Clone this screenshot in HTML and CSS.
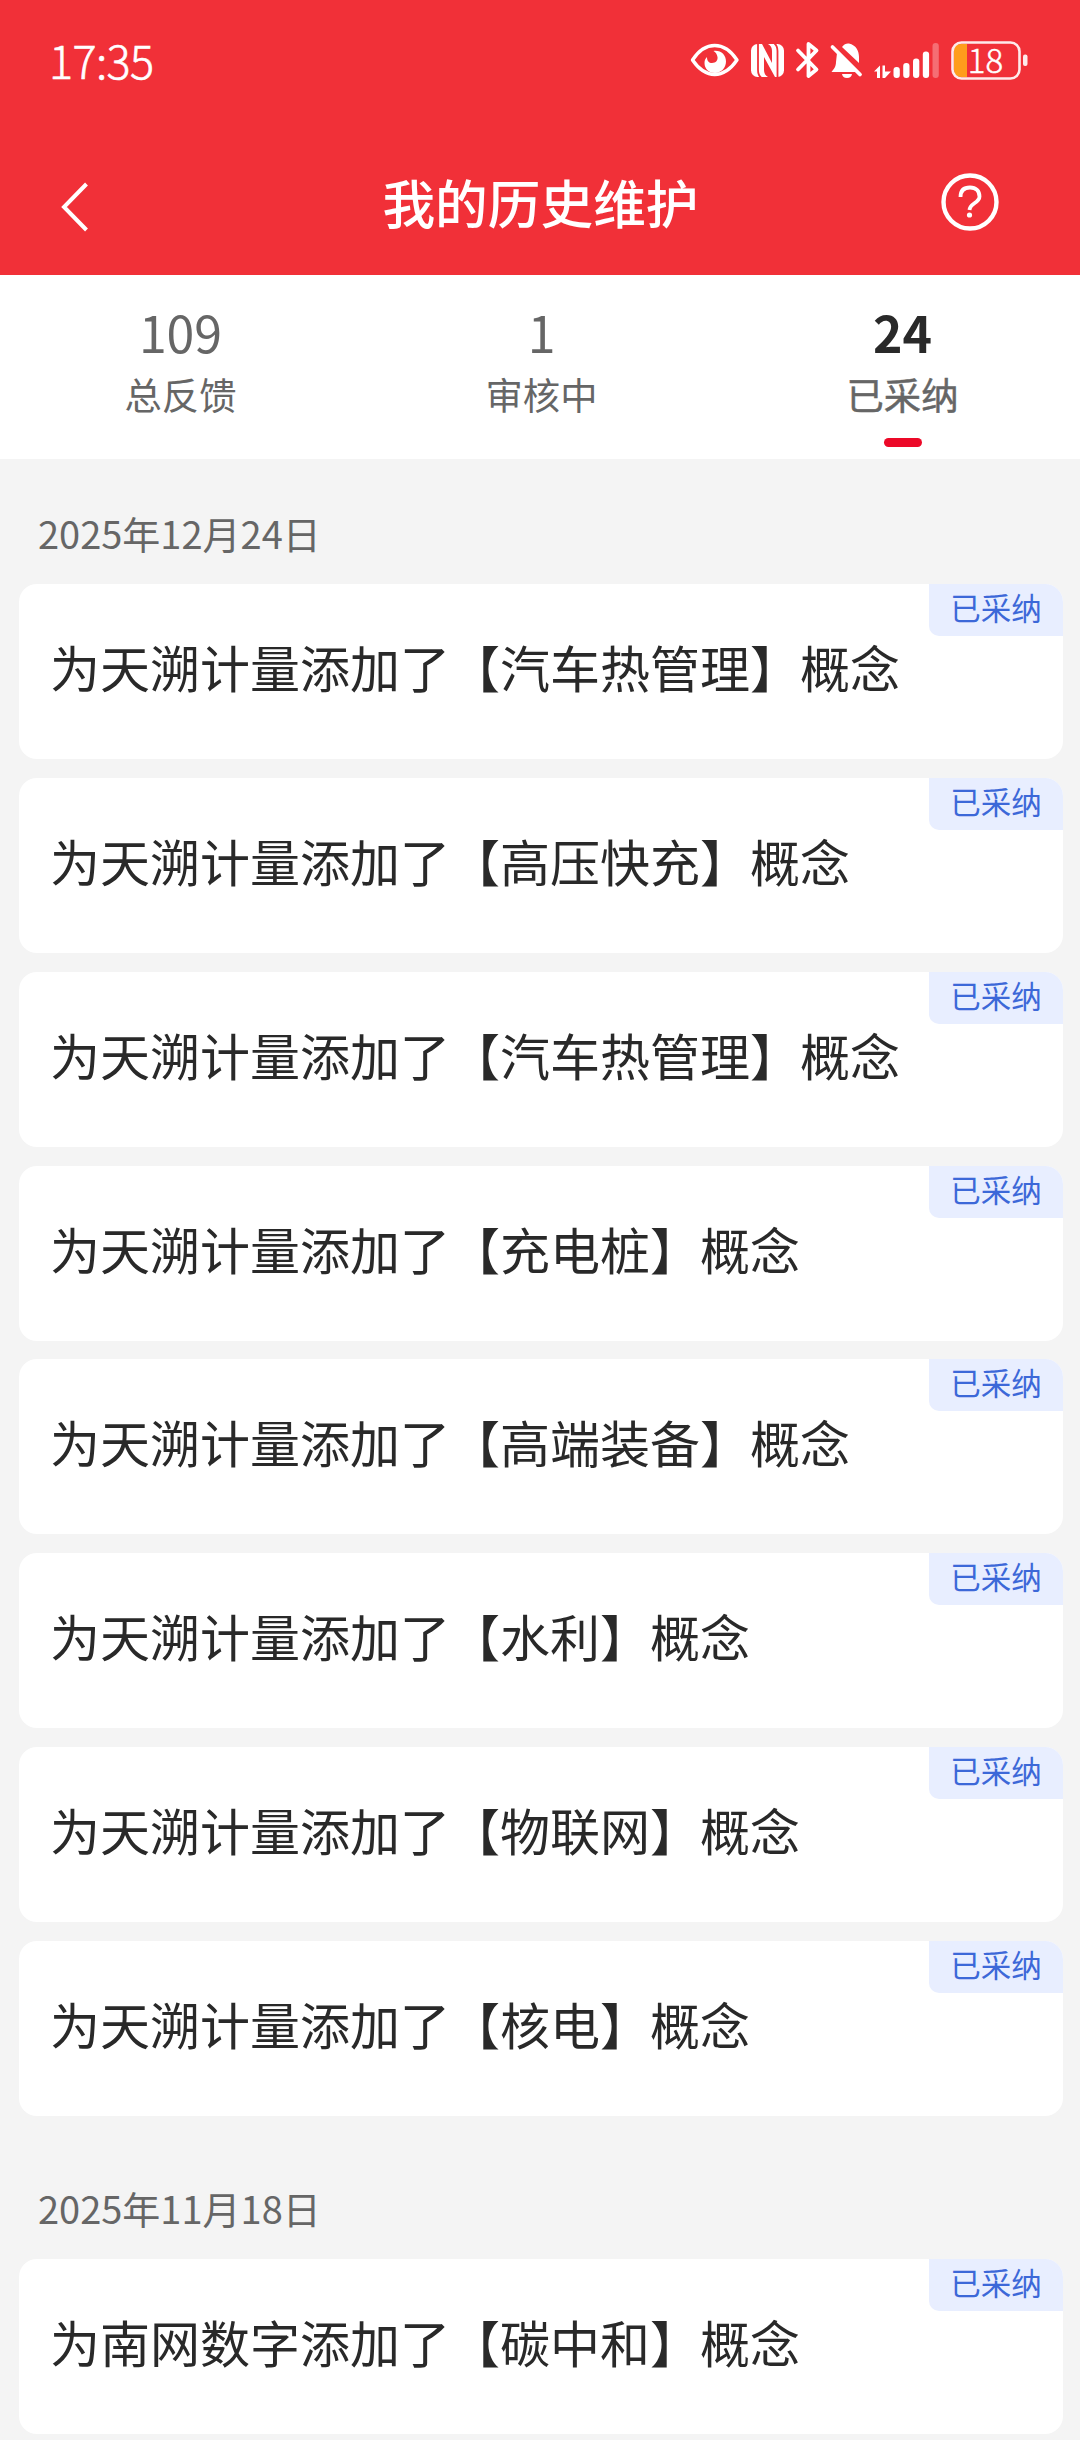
FILE: index.html
```html
<!DOCTYPE html>
<html lang="zh-CN">
<head>
<meta charset="utf-8">
<title>我的历史维护</title>
<link rel="stylesheet" href="styles.css">
</head>
<body>
<header class="header">
  <div class="status-bar">
    <span class="clock">17:35</span>
    <svg class="status-icons" width="340" height="64" viewBox="690 28 340 64" fill="none">
      <path d="M692.500 60Q702 45.500 714.700 45.500T737 60Q727 74.500 714.700 74.500T692.500 60Z" stroke="#fff" stroke-width="3.400" stroke-linejoin="round"/>
      <path d="M713.500 51C721 50 726 55 726 61.500S721 73 715 73S704.500 69 704.500 63C704.500 60 705.500 58.500 707 57C707 61 709 63 712 63C716 63 718 60 717.500 57C717 54 715.500 52 713.500 51Z" fill="#fff"/>
      <rect x="751" y="44" width="33" height="33" rx="6.500" fill="#fff"/>
      <path d="M758 44V70Q758 75 761 77.500M777.500 77V51Q777.500 46 774.500 43.500" stroke="#f13038" stroke-width="1.800"/>
      <path d="M764 57L775 77H768Q764 75 764 70ZM762 44H768Q772 46 772 51V63Z" fill="#f13038"/>
      <path d="M798 50.500L816.500 69.500L808.500 76V44L816.500 50.500L798 69.500" stroke="#fff" stroke-width="3.800" stroke-linejoin="round" stroke-linecap="round"/>
      <path d="M837 53L856 72H831.500C833.500 69.500 836 67 836 62ZM842 47C844 44 847 43 849 43.500C856 45 859 51 859 57V63Z" fill="#fff"/>
      <path d="M832.500 47L860 74.500" stroke="#fff" stroke-width="3.800" stroke-linecap="round"/>
      <path d="M842 74H852C851.500 76.500 850 78 847 78S842.500 76.500 842 74Z" fill="#fff"/>
      <path d="M874 71.500L880 65.500V78H877V71.500ZM882.500 65.500H885V71.500H891L885 78H882.500Z" fill="#fff"/>
      <rect x="893.500" y="67" width="6.300" height="11" rx="3" fill="#fff"/>
      <rect x="903.200" y="63" width="6.300" height="15" rx="3" fill="#fff"/>
      <rect x="913" y="58.500" width="6.300" height="19.500" rx="3" fill="#fff"/>
      <rect x="922.800" y="51.500" width="6.300" height="26.500" rx="3" fill="#fff"/>
      <rect x="932.500" y="43" width="6.300" height="35" rx="3" fill="#fff" opacity=".3"/>
      <path d="M967 44H961Q954 44 954 51V70Q954 77 961 77H967Z" fill="#ff9d1c"/>
      <rect x="952.500" y="42.500" width="67" height="36" rx="9" stroke="#fff" stroke-opacity=".9" stroke-width="2.600"/>
      <rect x="1023" y="54.500" width="4.500" height="11.500" rx="2" fill="#fff" fill-opacity=".9"/>
      <text class="battery-level" x="985.500" y="73">18</text>
    </svg>
  </div>
  <div class="nav-bar">
    <svg class="back" width="28" height="50" viewBox="0 0 28 50" fill="none"><path d="M25.500 2L3 25L25.500 48" stroke="#fff" stroke-width="4"/></svg>
    <h1 class="title">我的历史维护</h1>
    <svg class="help" width="60" height="60" viewBox="0 0 60 60" fill="none" stroke="#fff"><circle cx="30" cy="30" r="26.500" stroke-width="4.400"/><path d="M20.500 25C20.500 18.500 24 15.500 30 15.500S39.500 19 39.500 24.500C39.500 31 30 31 29.500 38" stroke-width="3.800"/><circle cx="29.500" cy="43" r="2.600" fill="#fff" stroke="none"/></svg>
  </div>
</header>
<nav class="tabs">
  <div class="tab"><span class="count">109</span><span class="label">总反馈</span></div>
  <div class="tab"><span class="count">1</span><span class="label">审核中</span></div>
  <div class="tab active"><span class="count">24</span><span class="label">已采纳</span><span class="indicator"></span></div>
</nav>
<main class="feed">
  <section class="group">
    <h2 class="date">2025年12月24日</h2>
    <div class="cards">
      <article class="card"><p>为天溯计量添加了【汽车热管理】概念</p><span class="badge">已采纳</span></article>
      <article class="card"><p>为天溯计量添加了【高压快充】概念</p><span class="badge">已采纳</span></article>
      <article class="card"><p>为天溯计量添加了【汽车热管理】概念</p><span class="badge">已采纳</span></article>
      <article class="card"><p>为天溯计量添加了【充电桩】概念</p><span class="badge">已采纳</span></article>
      <article class="card"><p>为天溯计量添加了【高端装备】概念</p><span class="badge">已采纳</span></article>
      <article class="card"><p>为天溯计量添加了【水利】概念</p><span class="badge">已采纳</span></article>
      <article class="card"><p>为天溯计量添加了【物联网】概念</p><span class="badge">已采纳</span></article>
      <article class="card"><p>为天溯计量添加了【核电】概念</p><span class="badge">已采纳</span></article>
    </div>
  </section>
  <section class="group">
    <h2 class="date">2025年11月18日</h2>
    <div class="cards">
      <article class="card"><p>为南网数字添加了【碳中和】概念</p><span class="badge">已采纳</span></article>
    </div>
  </section>
</main>
</body>
</html>
```
FILE: styles.css
```css
* { box-sizing: border-box; margin: 0; padding: 0; }
body {
  width: 1080px;
  height: 2440px;
  overflow: hidden;
  background: #f4f4f4;
  color: #292929;
  font-family: "Noto Sans CJK SC", "Noto Sans", sans-serif;
}
.header { height: 275px; background: #f13038; color: #fff; }
.status-bar {
  display: flex;
  justify-content: space-between;
  height: 129px;
  padding: 28px 50px 0 49px;
}
.clock {
  margin-top: 9px;
  font-size: 45px;
  line-height: 46px;
  font-weight: 300;
  letter-spacing: -0.6px;
  -webkit-text-stroke: 0.6px #fff;
}
.status-icons { display: block; }
.battery-level {
  fill: #fff;
  font-size: 33px;
  font-weight: 300;
  stroke: #fff;
  stroke-width: 0.5px;
  text-anchor: middle;
}
.nav-bar {
  display: flex;
  align-items: flex-start;
  justify-content: space-between;
  height: 146px;
  padding: 43px 80px 0 61px;
}
.back { margin-top: 10px; }
.title { margin: -1px 0 0 52px; font-size: 52.7px; line-height: 60px; font-weight: 500; }
.tabs {
  display: grid;
  grid-template-columns: 361px 361px 361px;
  height: 184px;
  background: #fff;
  color: #666;
}
.tab { display: flex; flex-direction: column; align-items: center; padding-top: 26px; }
.count { font-size: 50px; line-height: 60px; }
.label { margin-top: 5px; font-size: 37.3px; line-height: 56px; }
.active .count { color: #292929; font-weight: 700; }
.active .label { -webkit-text-stroke: 0.5px #666; }
.indicator { width: 38px; height: 9px; margin-top: 16px; border-radius: 5px; background: #ec0928; }
.feed { padding: 0 17px 0 19px; }
.date {
  height: 125px;
  padding: 46px 0 0 19px;
  color: #666;
  font-size: 38px;
  line-height: 56px;
  font-weight: 400;
}
.group + .group .date { height: 143px; padding-top: 64px; }
.cards { display: grid; row-gap: 18.86px; }
.card {
  display: flex;
  align-items: flex-start;
  justify-content: space-between;
  height: 175px;
  padding-left: 31px;
  border-radius: 18px;
  background: #fff;
  overflow: hidden;
}
.card p { padding-top: 46px; font-size: 50px; line-height: 72px; white-space: nowrap; }
.badge {
  width: 134px;
  height: 52px;
  border-radius: 0 0 0 10px;
  background: #e8eeff;
  color: #3c68d8;
  font-size: 30.5px;
  line-height: 46px;
  text-align: center;
}
```
